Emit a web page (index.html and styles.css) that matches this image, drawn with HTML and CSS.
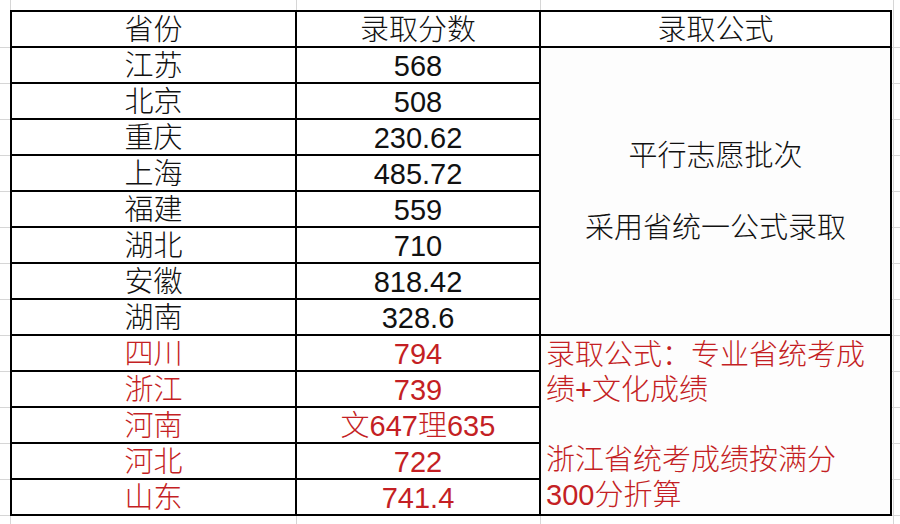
FILE: index.html
```html
<!DOCTYPE html>
<html lang="zh-CN">
<head>
<meta charset="utf-8">
<title>录取分数</title>
<link rel="stylesheet" href="styles.css">
</head>
<body>
<div class="sheet">
  <div class="grid">
    <div class="cell head">省份</div>
    <div class="cell head">录取分数</div>
    <div class="cell head">录取公式</div>

    <div class="cell">江苏</div><div class="cell">568</div>
    <div class="cell merged">平行志愿批次<br><br>采用省统一公式录取</div>
    <div class="cell">北京</div><div class="cell">508</div>
    <div class="cell">重庆</div><div class="cell">230.62</div>
    <div class="cell">上海</div><div class="cell">485.72</div>
    <div class="cell">福建</div><div class="cell">559</div>
    <div class="cell">湖北</div><div class="cell">710</div>
    <div class="cell">安徽</div><div class="cell">818.42</div>
    <div class="cell">湖南</div><div class="cell">328.6</div>

    <div class="cell red">四川</div><div class="cell red">794</div>
    <div class="cell red note">录取公式：专业省统考成<br>绩+文化成绩<br><br>浙江省统考成绩按满分<br>300分折算</div>
    <div class="cell red">浙江</div><div class="cell red">739</div>
    <div class="cell red">河南</div><div class="cell red">文647理635</div>
    <div class="cell red">河北</div><div class="cell red">722</div>
    <div class="cell red">山东</div><div class="cell red">741.4</div>
  </div>
</div>
</body>
</html>
```

FILE: styles.css
```css
html, body {
  margin: 0;
  padding: 0;
}
body {
  width: 900px;
  height: 524px;
  overflow: hidden;
  background-color: #ffffff;
  background-image:
    linear-gradient(#d6d6d6, #d6d6d6),
    linear-gradient(#d6d6d6, #d6d6d6),
    linear-gradient(#d6d6d6, #d6d6d6),
    linear-gradient(#d6d6d6, #d6d6d6),
    repeating-linear-gradient(to bottom, transparent 0 35px, #d6d6d6 35px 36px);
  background-size: 1px 100%, 1px 100%, 1px 100%, 1px 100%, 100% 100%;
  background-position: 10px 0, 296px 0, 540px 0, 893px 0, 0 12px;
  background-repeat: no-repeat, no-repeat, no-repeat, no-repeat, repeat;
  font-family: "Liberation Sans", "Noto Sans CJK SC", sans-serif;
  color: #111111;
}
.sheet {
  padding: 10px 0 0 10px;
}
.grid {
  display: grid;
  grid-template-columns: 283px 242px 349px;
  grid-auto-rows: 34px;
  gap: 2px;
  padding: 2px;
  background: #000000;
  width: max-content;
}
.cell {
  background: #ffffff;
  display: flex;
  align-items: center;
  justify-content: center;
  font-size: 29px;
  font-weight: 300;
  line-height: 34px;
  white-space: nowrap;
  overflow: hidden;
  padding-top: 1px;
}
.merged {
  grid-column: 3;
  grid-row: 2 / span 8;
  line-height: 36px;
  text-align: center;
  background: #fdfdfd;
}
.red {
  color: #c41f24;
}
.note {
  grid-column: 3;
  grid-row: 10 / span 5;
  display: block;
  text-align: left;
  line-height: 35px;
  padding: 2px 0 0 5px;
  overflow: visible;
  background: #fdfdfd;
}
```
